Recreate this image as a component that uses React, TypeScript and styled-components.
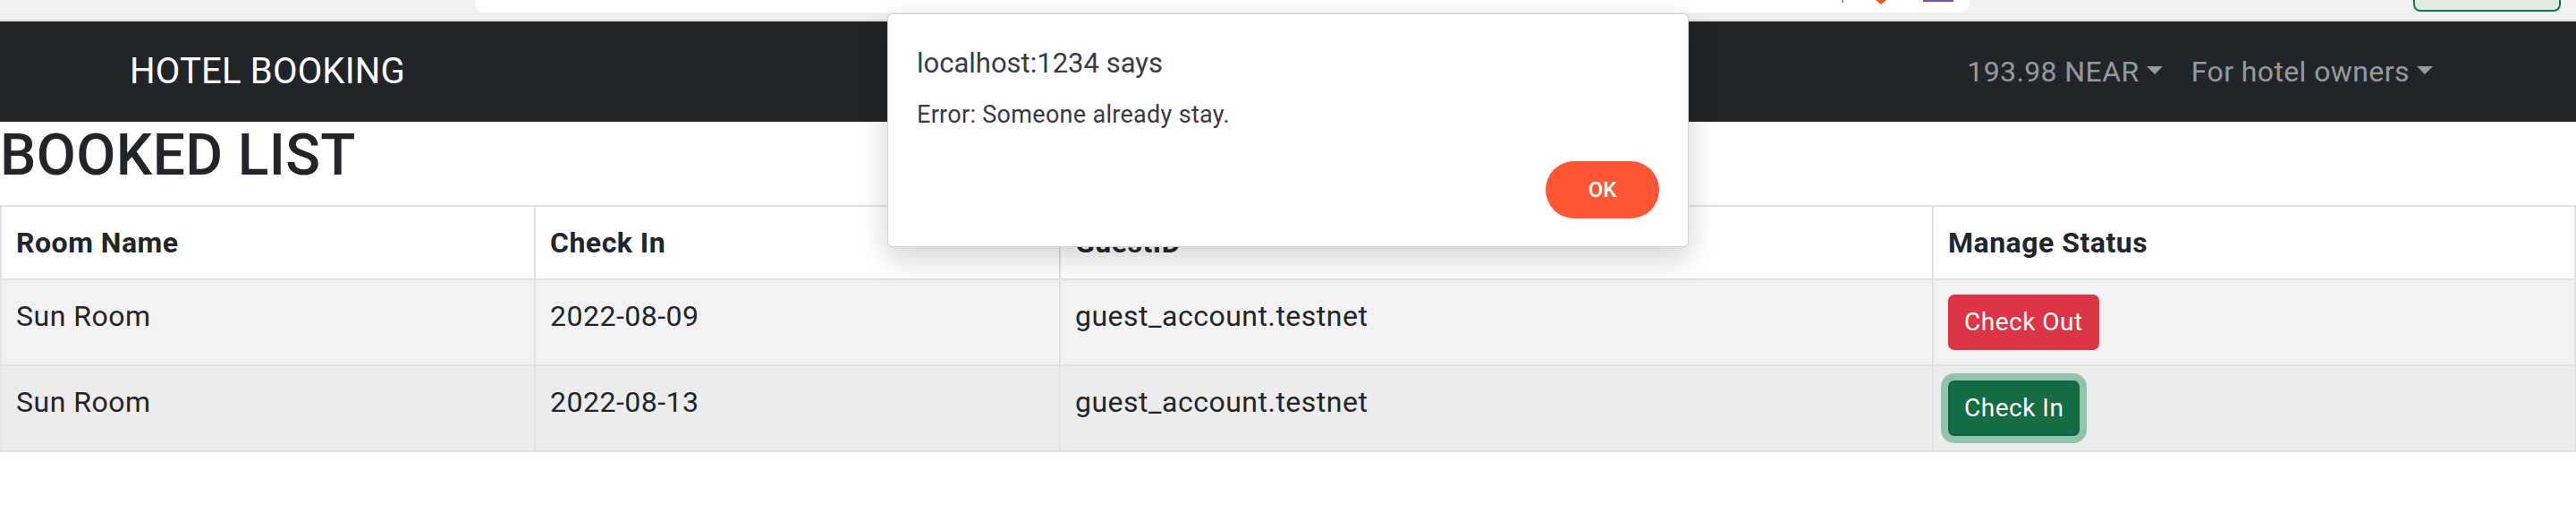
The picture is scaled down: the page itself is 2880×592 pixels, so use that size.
import React from "react";
import styled, { createGlobalStyle } from "styled-components";

const GlobalStyle = createGlobalStyle`
  html, body {
    margin: 0;
    padding: 0;
    background: #ffffff;
  }
  body {
    font-family: Roboto, "Liberation Sans", Arial, sans-serif;
    color: #212529;
    -webkit-font-smoothing: antialiased;
  }
  * { box-sizing: border-box; }
`;

const Page = styled.div`
  position: relative;
  width: 2880px;
  min-height: 592px;
  background: #ffffff;
`;

/* ---------- browser chrome strip ---------- */
const ChromeStrip = styled.div`
  display: flex;
  align-items: flex-start;
  height: 24px;
  background: #f1f1f1;
  border-bottom: 2px solid #dadde0;
`;

const AddressBar = styled.div`
  display: flex;
  align-items: flex-start;
  justify-content: flex-end;
  margin-left: 531px;
  width: 1671px;
  height: 14px;
  padding-right: 18px;
  background: #ffffff;
  border-radius: 0 0 10px 10px;
`;

const Separator = styled.span`
  width: 2px;
  height: 3px;
  background: #9a9a9a;
`;

const OrangeMark = styled.span`
  margin-left: 36px;
  width: 0;
  height: 0;
  border-left: 6px solid transparent;
  border-right: 6px solid transparent;
  border-top: 5px solid #f0541e;
`;

const PurpleMark = styled.span`
  margin-left: 41px;
  width: 34px;
  height: 2px;
  background: #7a4bb5;
`;

const ExtensionChip = styled.div`
  margin-left: 496px;
  width: 165px;
  height: 13px;
  background: #e0e9e4;
  border: 2px solid #0d7a3f;
  border-top: none;
  border-radius: 0 0 8px 8px;
`;

/* ---------- navbar ---------- */
const Navbar = styled.nav`
  display: flex;
  align-items: center;
  justify-content: space-between;
  height: 112px;
  padding: 0 144px 0 145px;
  background: #212529;
`;

const Brand = styled.a`
  font-size: 40px;
  line-height: 60px;
  letter-spacing: 0.2px;
  padding: 10px 0;
  color: #ffffff;
  text-decoration: none;
  white-space: nowrap;
`;

const NavList = styled.div`
  display: flex;
  align-items: center;
`;

const NavLink = styled.a`
  display: inline-block;
  padding: 16px;
  font-size: 32px;
  line-height: 48px;
  letter-spacing: 0.4px;
  color: rgba(255, 255, 255, 0.55);
  text-decoration: none;
  white-space: nowrap;

  &::after {
    content: "";
    display: inline-block;
    margin-left: 0.255em;
    vertical-align: 0.255em;
    border-top: 0.3em solid;
    border-right: 0.3em solid transparent;
    border-left: 0.3em solid transparent;
    border-bottom: 0;
  }
`;

/* ---------- content ---------- */
const Heading = styled.h2`
  margin: 0 0 16px;
  font-size: 64px;
  font-weight: 500;
  line-height: 1.2;
  letter-spacing: 0.4px;
  color: #212529;
`;

const Table = styled.table`
  width: 2880px;
  table-layout: fixed;
  border-collapse: collapse;
  border: 2px solid #dee2e6;
  font-size: 32px;
  line-height: 48px;
  color: #212529;
`;

const Row = styled.tr<{ $bg: string }>`
  background: ${(p) => p.$bg};
`;

const HeadCell = styled.th`
  padding: 16px;
  text-align: left;
  font-weight: 700;
  letter-spacing: 0.5px;
  vertical-align: top;
  border: 2px solid #dee2e6;
`;

const Cell = styled.td`
  padding: 16px;
  vertical-align: top;
  letter-spacing: 0.5px;
  border: 2px solid #dee2e6;
  border-left-color: #e4e7ea;
`;

const Button = styled.button<{ $variant: "danger" | "success-active" }>`
  display: inline-block;
  padding: 8px 16px;
  font-family: Roboto, "Liberation Sans", Arial, sans-serif;
  font-size: 28px;
  line-height: 42px;
  letter-spacing: 0.5px;
  font-weight: 400;
  color: #ffffff;
  border-radius: 7px;
  cursor: pointer;
  background: ${(p) => (p.$variant === "danger" ? "#dc3545" : "#146c43")};
  border: 2px solid ${(p) => (p.$variant === "danger" ? "#dc3545" : "#13653f")};
  box-shadow: ${(p) =>
    p.$variant === "danger" ? "none" : "0 0 0 8px rgba(60, 153, 110, 0.5)"};
`;

/* ---------- alert dialog ---------- */
const Dialog = styled.div`
  position: absolute;
  top: 15px;
  left: 992px;
  width: 896px;
  height: 261px;
  display: flex;
  flex-direction: column;
  padding: 36px 32px 31px;
  background: #ffffff;
  border: 1px solid rgba(0, 0, 0, 0.18);
  border-radius: 6px;
  box-shadow: 0 12px 34px rgba(0, 0, 0, 0.18);
  color: #383a4a;
`;

const DialogTitle = styled.div`
  font-size: 31px;
  line-height: 37px;
`;

const DialogMessage = styled.div`
  margin-top: 23px;
  font-size: 27px;
  line-height: 32px;
  letter-spacing: 0.3px;
`;

const DialogActions = styled.div`
  display: flex;
  justify-content: flex-end;
  margin-top: auto;
`;

const OkButton = styled.button`
  width: 127px;
  height: 64px;
  border: none;
  border-radius: 32px;
  background: #ff5733;
  color: #ffffff;
  font-family: Roboto, "Liberation Sans", Arial, sans-serif;
  font-size: 24px;
  font-weight: 500;
  cursor: pointer;
`;

type Booking = { room: string; date: string; guest: string; status: "out" | "in" };

const bookings: Booking[] = [
  { room: "Sun Room", date: "2022-08-09", guest: "guest_account.testnet", status: "out" },
  { room: "Sun Room", date: "2022-08-13", guest: "guest_account.testnet", status: "in" },
];

const rowBg = ["#f2f2f2", "#ececec"];

export default function App() {
  return (
    <Page>
      <GlobalStyle />
      <ChromeStrip>
        <AddressBar>
          <Separator />
          <OrangeMark />
          <PurpleMark />
        </AddressBar>
        <ExtensionChip />
      </ChromeStrip>

      <Navbar>
        <Brand href="#">HOTEL BOOKING</Brand>
        <NavList>
          <NavLink href="#">193.98 NEAR</NavLink>
          <NavLink href="#">For hotel owners</NavLink>
        </NavList>
      </Navbar>

      <Heading>BOOKED LIST</Heading>

      <Table>
        <colgroup>
          <col style={{ width: 597 }} />
          <col style={{ width: 587 }} />
          <col style={{ width: 976 }} />
          <col />
        </colgroup>
        <thead>
          <Row $bg="#ffffff">
            <HeadCell>Room Name</HeadCell>
            <HeadCell>Check In</HeadCell>
            <HeadCell>GuestID</HeadCell>
            <HeadCell>Manage Status</HeadCell>
          </Row>
        </thead>
        <tbody>
          {bookings.map((b, i) => (
            <Row key={i} $bg={rowBg[i]}>
              <Cell>{b.room}</Cell>
              <Cell>{b.date}</Cell>
              <Cell>{b.guest}</Cell>
              <Cell>
                {b.status === "out" ? (
                  <Button $variant="danger">Check Out</Button>
                ) : (
                  <Button $variant="success-active">Check In</Button>
                )}
              </Cell>
            </Row>
          ))}
        </tbody>
      </Table>

      <Dialog role="alertdialog">
        <DialogTitle>localhost:1234 says</DialogTitle>
        <DialogMessage>Error: Someone already stay.</DialogMessage>
        <DialogActions>
          <OkButton>OK</OkButton>
        </DialogActions>
      </Dialog>
    </Page>
  );
}
